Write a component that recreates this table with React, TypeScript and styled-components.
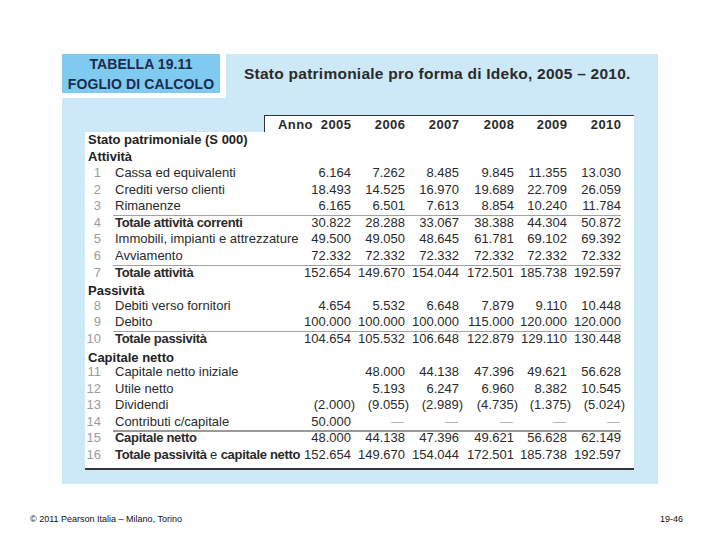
import React from "react";
import styled, { createGlobalStyle, css } from "styled-components";

const Global = createGlobalStyle`
  html, body { margin: 0; padding: 0; background: #ffffff; }
  body { font-family: "Liberation Sans", Arial, sans-serif; color: #222; }
`;

const Page = styled.div`
  width: 720px;
  height: 540px;
  display: flex;
  flex-direction: column;
  overflow: hidden;
`;

const Panel = styled.section`
  margin: 54px 0 0 62px;
  width: 596px;
  height: 430px;
  background: #cde8f7;
  display: flex;
  flex-direction: column;
`;

const HeaderBar = styled.div`
  display: flex;
  align-items: flex-start;
`;

const Tag = styled.div`
  width: 158px;
  height: 39px;
  background: #7ecaf0;
  border-right: 6px solid #fff;
  border-bottom: 5px solid #fff;
  display: flex;
  flex-direction: column;
  align-items: center;
  justify-content: center;
  color: #1c2a4c;
  font-weight: 700;
  font-size: 14px;
  line-height: 20px;
  letter-spacing: 0.1px;
`;

const Title = styled.h1`
  margin: 0 0 0 18px;
  height: 39px;
  display: flex;
  align-items: center;
  font-size: 15.5px;
  font-weight: 700;
  color: #2a2a2a;
  letter-spacing: 0.25px;
  white-space: nowrap;
`;

const Table = styled.div`
  margin: 17px 0 0 23px;
  width: 549px;
  display: flex;
  flex-direction: column;
`;

const HeadRow = styled.div`
  display: flex;
  justify-content: flex-end;
`;

const HeadBox = styled.div`
  box-sizing: border-box;
  width: 370px;
  height: 17px;
  background: #fff;
  border-top: 1px solid #333;
  border-left: 1px solid #333;
  display: grid;
  grid-template-columns: minmax(0, 1fr) 54px 54px 54px 55px 53px 54px;
  padding: 0 13px 0 13px;
  align-items: center;
  font-size: 13px;
  font-weight: 700;
  letter-spacing: 0.4px;
  color: #2a2a2a;
`;

const HeadCell = styled.span<{ $right?: boolean }>`
  white-space: nowrap;
  text-align: ${(p) => (p.$right ? "right" : "left")};
  margin-right: ${(p) => (p.$right ? "-0.4px" : "0")};
`;

const Body = styled.div`
  background: #fff;
  padding-bottom: 4px;
  border-bottom: 2px solid #363636;
  display: flex;
  flex-direction: column;
`;

const Row = styled.div<{ $rule?: "thin" | "thick" }>`
  display: grid;
  grid-template-columns: 28px minmax(0, 1fr) 54px 54px 54px 55px 53px 54px;
  padding-right: 13px;
  height: 16.58px;
  line-height: 16.58px;
  font-size: 13px;
  color: #2a2a2a;
  ${(p) =>
    p.$rule &&
    css`
      & > *:not(:first-child) {
        box-shadow: inset 0 ${p.$rule === "thick" ? "2px" : "1px"} 0
          ${p.$rule === "thick" ? "#9a9a9a" : "#a3a3a3"};
      }
    `}
`;

const Num = styled.span`
  text-align: right;
  padding-right: 12px;
  color: #9c9c9c;
`;

const Label = styled.span<{ $bold?: boolean }>`
  padding-left: 2px;
  white-space: nowrap;
  font-weight: ${(p) => (p.$bold ? 700 : 400)};
  letter-spacing: ${(p) => (p.$bold ? "-0.3px" : "0")};
`;

const Plain = styled.span`
  font-weight: 400;
  letter-spacing: 0;
`;

const Section = styled.span<{ $drop?: boolean }>`
  grid-column: 1 / 3;
  padding-left: 3px;
  position: relative;
  top: ${(p) => (p.$drop ? "2px" : "0")};
  font-weight: 700;
  white-space: nowrap;
  color: #222;
`;

const Value = styled.span<{ $dash?: boolean }>`
  text-align: right;
  white-space: nowrap;
  color: ${(p) => (p.$dash ? "#b5b5b5" : "inherit")};
  padding-right: ${(p) => (p.$dash ? "1px" : "0")};
`;

const Hang = styled.span`
  margin-right: -4px;
`;

const Footer = styled.footer`
  margin-top: auto;
  display: flex;
  justify-content: space-between;
  padding: 0 37px 15px 30px;
  font-family: "Liberation Sans", Arial, sans-serif;
  font-size: 9px;
  line-height: 12px;
  color: #111;
`;

type DataRow =
  | { kind: "section"; label: string; drop?: boolean }
  | {
      kind: "line";
      n: number;
      label: React.ReactNode;
      bold?: boolean;
      rule?: "thin" | "thick";
      v: string[];
    };

const rows: DataRow[] = [
  { kind: "section", label: "Stato patrimoniale (S 000)" },
  { kind: "section", label: "Attività" },
  { kind: "line", n: 1, label: "Cassa ed equivalenti", v: ["6.164", "7.262", "8.485", "9.845", "11.355", "13.030"] },
  { kind: "line", n: 2, label: "Crediti verso clienti", v: ["18.493", "14.525", "16.970", "19.689", "22.709", "26.059"] },
  { kind: "line", n: 3, label: "Rimanenze", v: ["6.165", "6.501", "7.613", "8.854", "10.240", "11.784"] },
  { kind: "line", n: 4, label: "Totale attività correnti", bold: true, rule: "thin", v: ["30.822", "28.288", "33.067", "38.388", "44.304", "50.872"] },
  { kind: "line", n: 5, label: "Immobili, impianti e attrezzature", v: ["49.500", "49.050", "48.645", "61.781", "69.102", "69.392"] },
  { kind: "line", n: 6, label: "Avviamento", v: ["72.332", "72.332", "72.332", "72.332", "72.332", "72.332"] },
  { kind: "line", n: 7, label: "Totale attività", bold: true, rule: "thin", v: ["152.654", "149.670", "154.044", "172.501", "185.738", "192.597"] },
  { kind: "section", label: "Passività", drop: true },
  { kind: "line", n: 8, label: "Debiti verso fornitori", v: ["4.654", "5.532", "6.648", "7.879", "9.110", "10.448"] },
  { kind: "line", n: 9, label: "Debito", v: ["100.000", "100.000", "100.000", "115.000", "120.000", "120.000"] },
  { kind: "line", n: 10, label: "Totale passività", bold: true, rule: "thin", v: ["104.654", "105.532", "106.648", "122.879", "129.110", "130.448"] },
  { kind: "section", label: "Capitale netto", drop: true },
  { kind: "line", n: 11, label: "Capitale netto iniziale", v: ["", "48.000", "44.138", "47.396", "49.621", "56.628"] },
  { kind: "line", n: 12, label: "Utile netto", v: ["", "5.193", "6.247", "6.960", "8.382", "10.545"] },
  { kind: "line", n: 13, label: "Dividendi", v: ["(2.000)", "(9.055)", "(2.989)", "(4.735)", "(1.375)", "(5.024)"] },
  { kind: "line", n: 14, label: "Contributi c/capitale", v: ["50.000", "—", "—", "—", "—", "—"] },
  { kind: "line", n: 15, label: "Capitale netto", bold: true, rule: "thick", v: ["48.000", "44.138", "47.396", "49.621", "56.628", "62.149"] },
  {
    kind: "line",
    n: 16,
    label: (
      <>
        Totale passività <Plain>e</Plain> capitale netto
      </>
    ),
    bold: true,
    v: ["152.654", "149.670", "154.044", "172.501", "185.738", "192.597"],
  },
];

const years = ["2005", "2006", "2007", "2008", "2009", "2010"];

function renderValue(s: string, i: number) {
  if (s === "—") return <Value key={i} $dash>—</Value>;
  if (s.startsWith("(")) {
    return (
      <Value key={i}>
        {s.slice(0, -1)}
        <Hang>)</Hang>
      </Value>
    );
  }
  return <Value key={i}>{s}</Value>;
}

export default function App() {
  return (
    <Page>
      <Global />
      <Panel>
        <HeaderBar>
          <Tag>
            <span>TABELLA 19.11</span>
            <span>FOGLIO DI CALCOLO</span>
          </Tag>
          <Title>Stato patrimoniale pro forma di Ideko, 2005 – 2010.</Title>
        </HeaderBar>
        <Table>
          <HeadRow>
            <HeadBox>
              <HeadCell>Anno</HeadCell>
              {years.map((y) => (
                <HeadCell key={y} $right>
                  {y}
                </HeadCell>
              ))}
            </HeadBox>
          </HeadRow>
          <Body>
            {rows.map((r, idx) =>
              r.kind === "section" ? (
                <Row key={idx}>
                  <Section $drop={r.drop}>{r.label}</Section>
                </Row>
              ) : (
                <Row key={idx} $rule={r.rule}>
                  <Num>{r.n}</Num>
                  <Label $bold={r.bold}>{r.label}</Label>
                  {r.v.map(renderValue)}
                </Row>
              )
            )}
          </Body>
        </Table>
      </Panel>
      <Footer>
        <span>© 2011 Pearson Italia – Milano, Torino</span>
        <span>19-46</span>
      </Footer>
    </Page>
  );
}
